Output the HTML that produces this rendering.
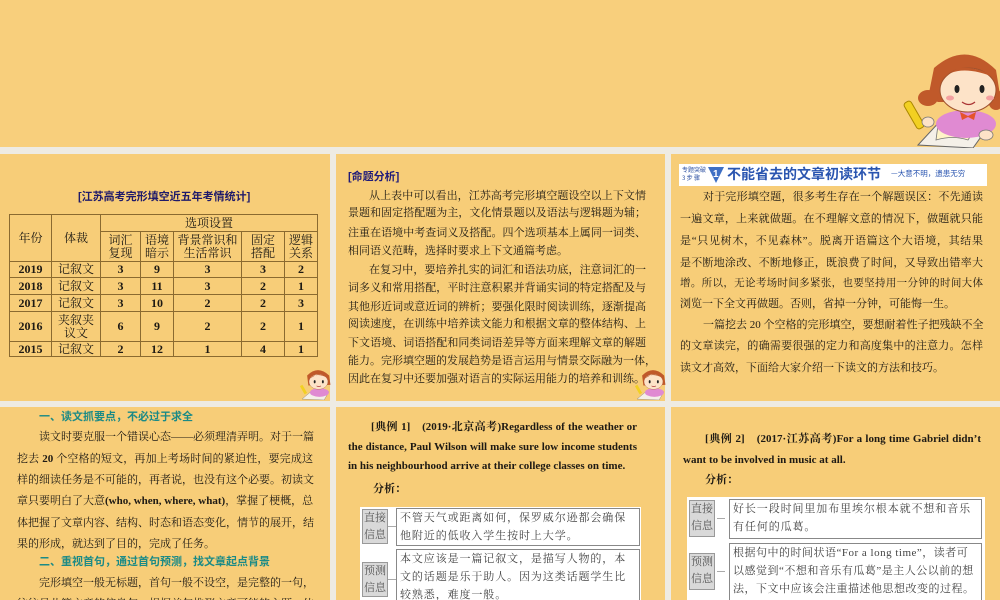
<!DOCTYPE html>
<html><head><meta charset="utf-8">
<style>
*{margin:0;padding:0;box-sizing:border-box}
body{width:1000px;height:600px;overflow:hidden;background:#eeebe3;position:relative;font-family:"Liberation Serif","Noto Serif CJK SC","Noto Sans CJK SC",serif;color:#1e1a14}
.p{position:absolute;background:#f7cd78;overflow:hidden}
.l{position:absolute;font-size:11px;line-height:14px;white-space:nowrap;text-align:justify;text-align-last:justify}
.n{text-align-last:left}
.h{color:#1b8a86;font-weight:bold;font-family:"Liberation Sans","Noto Sans CJK SC",sans-serif}
.b{font-weight:bold}
table{border-collapse:collapse;position:absolute;font-size:12px}
td{border:1px solid #8a6a30;text-align:center;vertical-align:middle;line-height:13px;padding:0}
.box{position:absolute;background:#fff}
.lab{position:absolute;background:#d9d9d9;border:1px solid #999;font-size:11px;line-height:17px;color:#555;text-align:center;width:26px}
.txt{position:absolute;border:1px solid #888;font-size:11px;line-height:18px;padding:0 3px;color:#444;letter-spacing:0.9px}
.dash{position:absolute;height:1px;background:#aaa;width:8px}
</style></head><body>

<div class="p" style="left:0;top:0;width:1000px;height:147px;background:#f8cf7c"></div>
<svg style="position:absolute;left:898px;top:40px" width="102" height="108" viewBox="0 0 102 108">
<path d="M20 105 L45 78 L95 80 L75 108 Z" fill="#f4f0e8" stroke="#666" stroke-width="1"/>
<path d="M40 85 Q60 78 80 84 L70 100 Q55 95 38 100Z" fill="#fff4c8" stroke="#777" stroke-width="0.8"/>
<ellipse cx="68" cy="84" rx="30" ry="14" fill="#e08ad2"/>
<path d="M36 28 Q68 0 98 30 L102 55 L96 62 L40 62 L30 58Z" fill="#c0592a"/>
<ellipse cx="30" cy="58" rx="10" ry="8" fill="#c0592a"/>
<ellipse cx="98" cy="60" rx="8" ry="10" fill="#c0592a"/>
<ellipse cx="70" cy="50" rx="28" ry="22" fill="#fde3c8" stroke="#a0522d" stroke-width="1"/>
<path d="M42 40 Q60 22 98 38 Q80 26 60 28Z" fill="#c0592a"/>
<ellipse cx="59" cy="49" rx="2.5" ry="4" fill="#222"/>
<ellipse cx="84" cy="49" rx="2.5" ry="4" fill="#222"/>
<ellipse cx="52" cy="58" rx="4" ry="2.5" fill="#f4a0a0"/>
<ellipse cx="92" cy="58" rx="4" ry="2.5" fill="#f4a0a0"/>
<path d="M64 62 Q71 67 77 62" stroke="#a33" fill="none" stroke-width="1.2"/>
<path d="M62 72 L70 76 L78 72 L76 80 L70 77 L64 80Z" fill="#e5532b"/>
<rect x="12" y="60" width="8" height="30" rx="3" fill="#f2d022" stroke="#a80" transform="rotate(-30 16 75)"/>
<ellipse cx="30" cy="82" rx="6" ry="5" fill="#fde3c8" stroke="#777" stroke-width=".8"/>
<ellipse cx="88" cy="95" rx="7" ry="5" fill="#fde3c8" stroke="#777" stroke-width=".8"/>
</svg>

<!-- Panel 1 -->
<div class="p" style="left:0;top:154px;width:330px;height:247px">
<div class="l n b" style="left:78px;top:36px;color:#1f1a6a;font-size:11px;font-family:'Liberation Sans','Noto Sans CJK SC',sans-serif">[江苏高考完形填空近五年考情统计]</div>
<table style="left:9px;top:60px;width:309px">
<tr style="height:17px"><td rowspan="2" style="width:42px">年份</td><td rowspan="2" style="width:49px">体裁</td><td colspan="5">选项设置</td></tr>
<tr style="height:30px"><td style="width:40px">词汇<br>复现</td><td style="width:33px">语境<br>暗示</td><td style="width:68px">背景常识和<br>生活常识</td><td style="width:43px">固定<br>搭配</td><td>逻辑<br>关系</td></tr>
<tr style="height:16px" class="b"><td>2019</td><td style="font-weight:normal">记叙文</td><td>3</td><td>9</td><td>3</td><td>3</td><td>2</td></tr>
<tr style="height:17px" class="b"><td>2018</td><td style="font-weight:normal">记叙文</td><td>3</td><td>11</td><td>3</td><td>2</td><td>1</td></tr>
<tr style="height:17px" class="b"><td>2017</td><td style="font-weight:normal">记叙文</td><td>3</td><td>10</td><td>2</td><td>2</td><td>3</td></tr>
<tr style="height:30px" class="b"><td>2016</td><td style="font-weight:normal">夹叙夹<br>议文</td><td>6</td><td>9</td><td>2</td><td>2</td><td>1</td></tr>
<tr style="height:15px" class="b"><td>2015</td><td style="font-weight:normal">记叙文</td><td>2</td><td>12</td><td>1</td><td>4</td><td>1</td></tr>
</table>
</div>

<!-- Panel 2 -->
<div class="p" style="left:336px;top:154px;width:329px;height:247px">
<div class="l n b" style="left:12px;top:16px;color:#1f1a7a;font-size:11px;font-family:'Liberation Sans','Noto Sans CJK SC',sans-serif">[命题分析]</div>
<div class="l" style="left:33px;top:35px;width:277px">从上表中可以看出，江苏高考完形填空题设空以上下文情</div>
<div class="l" style="left:12px;top:52px;width:298px">景题和固定搭配题为主，文化情景题以及语法与逻辑题为辅；</div>
<div class="l" style="left:12px;top:72px;width:298px">注重在语境中考查词义及搭配。四个选项基本上属同一词类、</div>
<div class="l n" style="left:12px;top:90px">相同语义范畴，选择时要求上下文通篇考虑。</div>
<div class="l" style="left:33px;top:109px;width:277px">在复习中，要培养扎实的词汇和语法功底，注意词汇的一</div>
<div class="l" style="left:12px;top:127px;width:298px">词多义和常用搭配，平时注意积累并背诵实词的特定搭配及与</div>
<div class="l" style="left:12px;top:146px;width:298px">其他形近词或意近词的辨析；要强化限时阅读训练，逐渐提高</div>
<div class="l" style="left:12px;top:163px;width:298px">阅读速度，在训练中培养读文能力和根据文章的整体结构、上</div>
<div class="l" style="left:12px;top:182px;width:298px">下文语境、词语搭配和同类词语差异等方面来理解文章的解题</div>
<div class="l" style="left:12px;top:200px;width:298px">能力。完形填空题的发展趋势是语言运用与情景交际融为一体，</div>
<div class="l n" style="left:12px;top:218px">因此在复习中还要加强对语言的实际运用能力的培养和训练。</div>
</div>

<!-- Panel 3 -->
<div class="p" style="left:671px;top:154px;width:329px;height:247px">
<div style="position:absolute;left:8px;top:10px;width:308px;height:22px;background:#fff"></div>
<div style="position:absolute;left:11px;top:12px;font-size:6px;line-height:8px;color:#2a4ea0;font-family:'Noto Sans CJK SC',sans-serif">专题突破<br>3 步 骤</div>
<svg style="position:absolute;left:36px;top:12px" width="18" height="18"><path d="M1 1 L17 1 L9 17Z" fill="#3e6fc4"/><text x="6" y="11" fill="#fff" font-size="10" font-weight="bold" font-family="Liberation Sans">1</text></svg>
<div style="position:absolute;left:56px;top:11px;font-size:14px;line-height:18px;font-weight:bold;color:#2a55b0;font-family:'Noto Sans CJK SC',sans-serif">不能省去的文章初读环节</div>
<div style="position:absolute;left:220px;top:15px;font-size:7.5px;line-height:10px;color:#2a55b0;font-family:'Noto Sans CJK SC',sans-serif">—大意不明，遗患无穷</div>
<div class="l" style="left:32px;top:36px;width:280px">对于完形填空题，很多考生存在一个解题误区：不先通读</div>
<div class="l" style="left:9px;top:58px;width:303px">一遍文章，上来就做题。在不理解文意的情况下，做题就只能</div>
<div class="l" style="left:9px;top:80px;width:303px">是“只见树木，不见森林”。脱离开语篇这个大语境，其结果</div>
<div class="l" style="left:9px;top:102px;width:303px">是不断地涂改、不断地修正，既浪费了时间，又导致出错率大</div>
<div class="l" style="left:9px;top:123px;width:303px;font-size:10.5px">增。所以，无论考场时间多紧张，也要坚持用一分钟的时间大体</div>
<div class="l n" style="left:9px;top:143px">浏览一下全文再做题。否则，省掉一分钟，可能悔一生。</div>
<div class="l" style="left:32px;top:164px;width:280px">一篇挖去 20 个空格的完形填空，要想耐着性子把残缺不全</div>
<div class="l" style="left:9px;top:185px;width:303px">的文章读完，的确需要很强的定力和高度集中的注意力。怎样</div>
<div class="l n" style="left:9px;top:207px">读文才高效，下面给大家介绍一下读文的方法和技巧。</div>
</div>

<svg style="position:absolute;left:298px;top:366px" width="34" height="34" viewBox="0 0 102 108">
<path d="M10 105 L40 80 L95 82 L80 108 Z" fill="#f4f0e8" stroke="#666"/>
<ellipse cx="65" cy="84" rx="30" ry="14" fill="#e08ad2"/>
<path d="M26 30 Q60 -4 96 30 L100 60 L30 62Z" fill="#c0592a"/>
<ellipse cx="62" cy="50" rx="30" ry="24" fill="#fde3c8" stroke="#a0522d"/>
<path d="M34 40 Q55 18 92 38 Q75 24 55 28Z" fill="#c0592a"/>
<ellipse cx="50" cy="50" rx="3" ry="5" fill="#222"/><ellipse cx="76" cy="50" rx="3" ry="5" fill="#222"/>
<path d="M56 63 Q63 68 70 63" stroke="#a33" fill="none" stroke-width="2"/>
<rect x="10" y="60" width="9" height="30" fill="#f2d022" transform="rotate(-30 14 75)"/></svg>
<svg style="position:absolute;left:633px;top:366px" width="34" height="34" viewBox="0 0 102 108">
<path d="M10 105 L40 80 L95 82 L80 108 Z" fill="#f4f0e8" stroke="#666"/>
<ellipse cx="65" cy="84" rx="30" ry="14" fill="#e08ad2"/>
<path d="M26 30 Q60 -4 96 30 L100 60 L30 62Z" fill="#c0592a"/>
<ellipse cx="62" cy="50" rx="30" ry="24" fill="#fde3c8" stroke="#a0522d"/>
<path d="M34 40 Q55 18 92 38 Q75 24 55 28Z" fill="#c0592a"/>
<ellipse cx="50" cy="50" rx="3" ry="5" fill="#222"/><ellipse cx="76" cy="50" rx="3" ry="5" fill="#222"/>
<path d="M56 63 Q63 68 70 63" stroke="#a33" fill="none" stroke-width="2"/>
<rect x="10" y="60" width="9" height="30" fill="#f2d022" transform="rotate(-30 14 75)"/></svg>

<!-- Panel 4 -->
<div class="p" style="left:0;top:407px;width:330px;height:193px">
<div class="l n h" style="left:39px;top:3px">一、读文抓要点，不必过于求全</div>
<div class="l" style="left:39px;top:23px;width:274px">读文时要克服一个错误心态——必须理清弄明。对于一篇</div>
<div class="l" style="left:17px;top:45px;width:296px">挖去 <b>20</b> 个空格的短文，再加上考场时间的紧迫性，要完成这</div>
<div class="l" style="left:17px;top:66px;width:296px">样的细读任务是不可能的，再者说，也没有这个必要。初读文</div>
<div class="l" style="left:17px;top:87px;width:296px">章只要明白了大意<b>(who, when, where, what)</b>，掌握了梗概，总</div>
<div class="l" style="left:17px;top:109px;width:296px">体把握了文章内容、结构、时态和语态变化，情节的展开，结</div>
<div class="l n" style="left:17px;top:130px">果的形成，就达到了目的，完成了任务。</div>
<div class="l n h" style="left:39px;top:148px">二、重视首句，通过首句预测，找文章起点背景</div>
<div class="l" style="left:39px;top:169px;width:274px">完形填空一般无标题，首句一般不设空，是完整的一句，</div>
<div class="l" style="left:17px;top:190px;width:296px">往往是此篇文章的信息句，根据首句推测文章可能的主题、体</div>
</div>

<!-- Panel 5 -->
<div class="p" style="left:336px;top:407px;width:329px;height:193px">
<div class="l b" style="left:35px;top:13px;width:266px;font-size:11px">[典例 1]　(2019·北京高考)Regardless of the weather or</div>
<div class="l b" style="left:12px;top:33px;width:289px;font-size:11px">the distance, Paul Wilson will make sure low income students</div>
<div class="l n b" style="left:12px;top:52px;font-size:11px">in his neighbourhood arrive at their college classes on time.</div>
<div class="l n b" style="left:37px;top:75px;font-size:11px">分析：</div>
<div class="box" style="left:24px;top:100px;width:281px;height:93px"></div>
<div class="lab" style="left:26px;top:102px;height:35px">直接<br>信息</div>
<div class="dash" style="left:52px;top:119px"></div>
<div class="txt" style="left:60px;top:101px;width:244px;height:38px">不管天气或距离如何，保罗威尔逊都会确保他附近的低收入学生按时上大学。</div>
<div class="lab" style="left:26px;top:155px;height:35px">预测<br>信息</div>
<div class="dash" style="left:52px;top:172px"></div>
<div class="txt" style="left:60px;top:142px;width:244px;height:55px">本文应该是一篇记叙文，是描写人物的，本文的话题是乐于助人。因为这类话题学生比较熟悉，难度一般。</div>
</div>

<!-- Panel 6 -->
<div class="p" style="left:671px;top:407px;width:329px;height:193px">
<div class="l b" style="left:34px;top:25px;width:276px;font-size:11px">[典例 2]　(2017·江苏高考)For a long time Gabriel didn’t</div>
<div class="l n b" style="left:12px;top:46px;font-size:11px">want to be involved in music at all.</div>
<div class="l n b" style="left:34px;top:66px;font-size:11px">分析：</div>
<div class="box" style="left:16px;top:90px;width:298px;height:103px"></div>
<div class="lab" style="left:18px;top:93px;height:37px">直接<br>信息</div>
<div class="dash" style="left:46px;top:111px"></div>
<div class="txt" style="left:58px;top:92px;width:253px;height:40px">好长一段时间里加布里埃尔根本就不想和音乐有任何的瓜葛。</div>
<div class="lab" style="left:18px;top:146px;height:37px">预测<br>信息</div>
<div class="dash" style="left:46px;top:164px"></div>
<div class="txt" style="left:58px;top:136px;width:253px;height:60px;letter-spacing:0.5px">根据句中的时间状语“For a long time”，读者可以感觉到“不想和音乐有瓜葛”是主人公以前的想法，下文中应该会注重描述他思想改变的过程。</div>
</div>

</body></html>
